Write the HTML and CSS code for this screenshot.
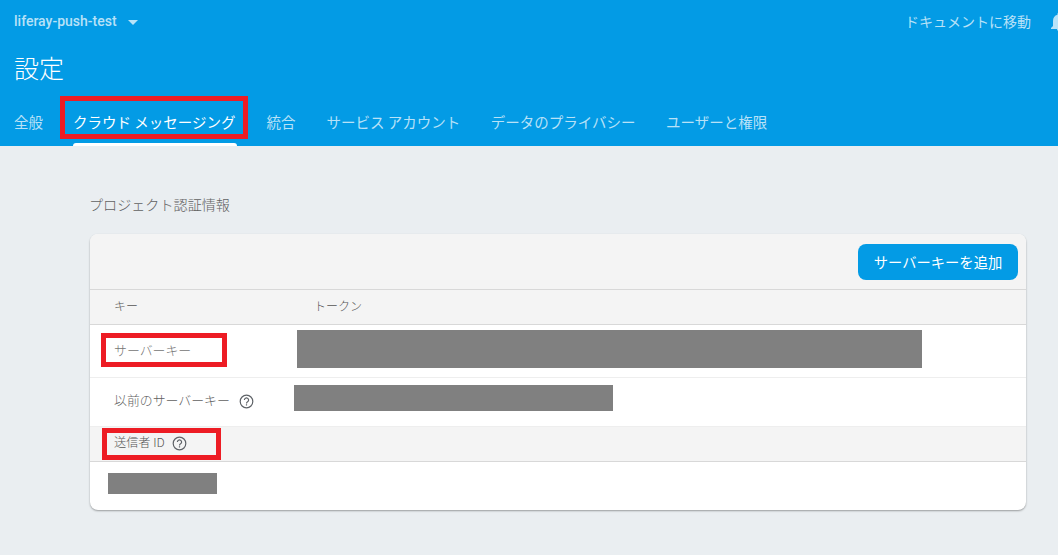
FILE: index.html
```html
<!DOCTYPE html>
<html lang="ja">
<head>
<meta charset="utf-8">
<title>設定</title>
<link rel="stylesheet" href="styles.css">
</head>
<body>
<header class="header">
  <div class="topbar">
    <div class="project">
      <span class="project-name">liferay-push-test</span>
      <svg class="caret" width="10" height="5" viewBox="0 0 10 5"><path d="M0 0h10L5 5z"/></svg>
    </div>
    <div class="top-actions">
      <span class="docs">ドキュメントに移動</span>
      <svg class="bell" width="16" height="19" viewBox="0 0 16 19"><path d="M8 19a2 2 0 0 0 2-2H6a2 2 0 0 0 2 2zm6-5V9c0-3-1.600-5.500-4.500-6.200V2a1.500 1.500 0 0 0-3 0v.8C3.600 3.500 2 6 2 9v5l-2 2v1h16v-1z"/></svg>
    </div>
  </div>
  <h1 class="title">設定</h1>
  <nav class="tabs">
    <a class="tab">全般</a>
    <a class="tab tab-active">クラウド メッセージング<span class="tab-mark mark-tab"></span></a>
    <a class="tab">統合</a>
    <a class="tab tab-nudge">サービス アカウント</a>
    <a class="tab">データのプライバシー</a>
    <a class="tab">ユーザーと権限</a>
  </nav>
</header>
<main class="content">
  <h2 class="section-title">プロジェクト認証情報</h2>
  <section class="card">
    <div class="toolbar"><button class="add-btn">サーバーキーを追加</button></div>
    <div class="row head-row">
      <span class="col-key head-key">キー</span>
      <span>トークン</span>
    </div>
    <div class="row key-row">
      <span class="col-key">サーバーキー</span>
      <span class="redact redact-token"></span>
      <span class="mark mark-key"></span>
    </div>
    <div class="row legacy-row">
      <span class="col-key legacy-label">以前のサーバーキー
        <svg class="help" width="15" height="15" viewBox="0 0 15 15"><circle cx="7.500" cy="7.500" r="6.300"/><path d="M5.400 6a2.100 2.100 0 1 1 3.200 1.800c-.8.500-1.100.9-1.100 1.600"/><path d="M7.500 10.300v1.300"/></svg>
      </span>
      <span class="redact redact-legacy"></span>
    </div>
    <div class="row sender-head">
      <span class="sender-label">送信者 ID
        <svg class="help" width="15" height="15" viewBox="0 0 15 15"><circle cx="7.500" cy="7.500" r="6.300"/><path d="M5.400 6a2.100 2.100 0 1 1 3.200 1.800c-.8.500-1.100.9-1.100 1.600"/><path d="M7.500 10.300v1.300"/></svg>
      </span>
      <span class="mark mark-sender"></span>
    </div>
    <div class="row sender-row">
      <span class="redact redact-sender"></span>
    </div>
  </section>
</main>
</body>
</html>
```
FILE: styles.css
```css
* { box-sizing: border-box; }
html, body { margin: 0; padding: 0; }
body {
  width: 1058px;
  height: 555px;
  overflow: hidden;
  background: #eaeef1;
  font-family: "Noto Sans CJK JP", Roboto, sans-serif;
  font-weight: 300;
  color: #616161;
}
.header {
  height: 146px;
  background: #039be5;
  padding: 0 0 0 14px;
  display: flex;
  flex-direction: column;
}
.topbar {
  height: 42px;
  display: flex;
  align-items: center;
  justify-content: space-between;
}
.project { display: flex; align-items: center; gap: 11px; }
.project-name {
  font: 500 14px/20px Roboto, sans-serif;
  color: rgba(255, 255, 255, .72);
  width: 103px;
  white-space: nowrap;
}
.caret { fill: rgba(255, 255, 255, .72); margin-top: 2px; }
.top-actions { display: flex; align-items: center; gap: 20px; width: 152px; flex: none; white-space: nowrap; }
.docs { font-size: 14px; font-weight: 400; line-height: 20px; color: rgba(255, 255, 255, .72); margin-left: -1px; }
.bell { fill: rgba(255, 255, 255, .72); flex: none; }
.title {
  margin: 7px 0 0 0;
  height: 36px;
  font-size: 25px;
  line-height: 36px;
  font-weight: 300;
  color: #fff;
}
.tabs {
  margin-top: 23px;
  display: flex;
  gap: 30.500px;
  font-size: 14.500px;
  font-weight: 400;
  line-height: 28px;
}
.tab {
  position: relative;
  color: rgba(255, 255, 255, .72);
  white-space: nowrap;
}
.tab-active { color: #fff; margin: 0 .5px 0 -.5px; }
.tab-nudge { margin-left: .5px; }
.tab-active::after {
  content: "";
  position: absolute;
  left: 0;
  right: -2px;
  top: 35px;
  height: 3px;
  background: #fff;
  border-radius: 3px 3px 0 0;
}
.tab-mark, .mark {
  position: absolute;
  border: 5px solid #ed1c24;
}
.mark-tab { left: -13px; top: -12px; width: 188px; height: 43px; }
.content { padding: 48px 32px 0 90px; }
.section-title {
  margin: 0 0 20px -1px;
  height: 20px;
  font-size: 14.100px;
  line-height: 20px;
  font-weight: 300;
  color: #616161;
}
.card {
  width: 936px;
  height: 276px;
  background: #fff;
  border-radius: 8px;
  box-shadow: 0 1px 2px rgba(0, 0, 0, .35);
  overflow: hidden;
}
.toolbar {
  height: 56px;
  background: #f4f4f4;
  border-bottom: 1px solid #d8d8d8;
  display: flex;
  justify-content: flex-end;
  align-items: flex-start;
  padding: 10px 8px 0 0;
}
.add-btn {
  width: 160px;
  height: 36px;
  border: 0;
  border-radius: 8px;
  background: #039be5;
  color: #fff;
  font-family: inherit;
  font-weight: 400;
  font-size: 14.300px;
  padding: 0 0 1px;
}
.row {
  position: relative;
  display: flex;
  align-items: center;
  padding-left: 24px;
  font-size: 12.900px;
}
.col-key { width: 201px; flex: none; white-space: nowrap; }
.head-key { width: 200px; }
.head-row {
  height: 35px;
  background: #f4f4f4;
  border-bottom: 1px solid #d8d8d8;
  padding-bottom: 3px;
  font-size: 12px;
  color: #555;
}
.key-row { height: 53px; padding-bottom: 4px; border-bottom: 1px solid #eeeeee; color: #757575; }
.legacy-row { height: 49px; padding-bottom: 5px; border-bottom: 1px solid #eeeeee; color: #616161; }
.legacy-label { display: flex; align-items: center; gap: 9px; }
.legacy-label .help { margin-top: 3px; }
.sender-label { display: flex; align-items: center; gap: 7px; }
.sender-label .help { margin-top: 2px; }
.sender-head {
  height: 35px;
  padding-bottom: 4px;
  background: #f4f4f4;
  border-bottom: 1px solid #d8d8d8;
  font-size: 12.200px;
  color: #555;
}
.sender-row { height: 48px; }
.help { fill: none; stroke: #5f6368; stroke-width: 1.200; flex: none; }
.redact { position: absolute; background: #808080; }
.redact-token { left: 207px; top: 5px; width: 625px; height: 38px; }
.redact-legacy { left: 204px; top: 7px; width: 319px; height: 26px; }
.redact-sender { left: 18px; top: 11px; width: 109px; height: 21px; }
.mark-key { left: 11px; top: 8px; width: 126px; height: 34px; }
.mark-sender { left: 12px; top: 1px; width: 119px; height: 32px; }
```
